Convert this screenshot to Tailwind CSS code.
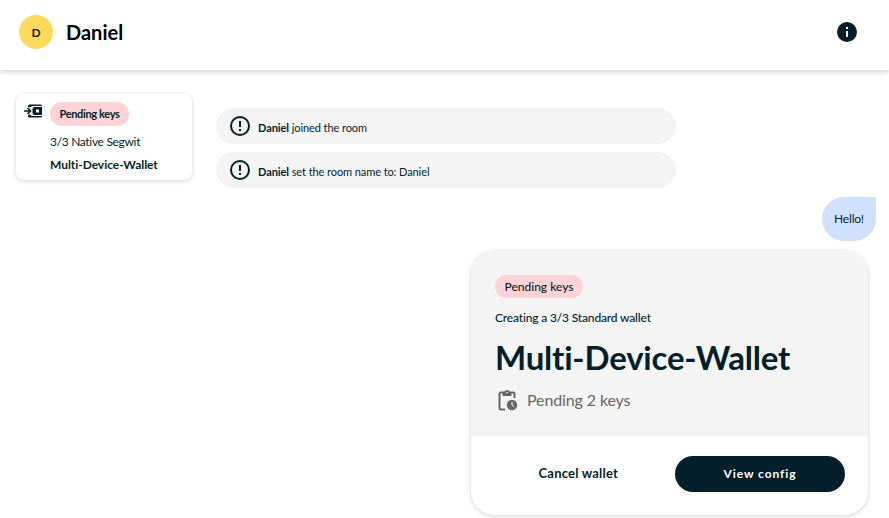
<!DOCTYPE html>
<html lang="en">
<head>
<meta charset="utf-8">
<title>Daniel</title>
<script src="https://cdn.jsdelivr.net/npm/@tailwindcss/browser@4"></script>
</head>
<body class="h-[518px] overflow-hidden bg-white font-['Lato',sans-serif] text-[#031f2b] [font-variant-ligatures:none]">
<header class="flex h-[70px] items-center pb-1.5 pl-[19px] pr-8 shadow-[0_1px_6px_rgba(0,0,0,0.22)]">
  <div class="flex size-[34px] items-center justify-center rounded-full bg-[#ffd95a] pt-px text-[12px] font-bold">D</div>
  <h1 class="ml-[13px] text-[20px] font-bold leading-6 text-black">Daniel</h1>
  <svg class="ml-auto size-5" viewBox="2 2 20 20" fill="#031f2b"><path d="M12 2a10 10 0 1 0 0 20 10 10 0 0 0 0-20zm1 15h-2v-6h2zm0-8h-2V7h2z"/></svg>
</header>
<main class="flex pl-4 pr-[13px] pt-6">
  <aside class="flex h-[86px] w-[176px] shrink-0 rounded-lg bg-white pl-2 pt-2 shadow-[0_1px_5px_rgba(0,0,0,0.18)]">
    <svg class="mt-[2px] h-[14px] w-[18px] shrink-0" viewBox="0 0 18 14" fill="none" stroke="#031f2b"><path d="M4 3V2q0-1.500 1.500-1.500h11Q18 .500 18 2H9Q7 2 6 3.500zM4 11v1q0 1.500 1.500 1.500h11q1.500 0 1.500-1.500H9q-2 0-3-1.500z" fill="#031f2b" stroke="none"/><path d="M10.500 3H18v8h-7.500Q8.500 11 8.500 9V5q0-2 2-2zm1.500 2.500v3h3v-3z" fill="#031f2b" fill-rule="evenodd" stroke="none"/><path d="M0 7h6M3.500 4l3 3-3 3" stroke-width="1.700"/></svg>
    <div class="ml-2">
      <span class="flex h-6 w-[79px] items-center justify-center whitespace-nowrap rounded-full bg-[#ffd3d5] text-[11px] font-bold tracking-[-0.35px]">Pending keys</span>
      <p class="mt-2 whitespace-nowrap text-[12px] leading-4 tracking-[-0.32px]">3/3 Native Segwit</p>
      <p class="mt-[7px] whitespace-nowrap text-[12px] font-bold leading-4 tracking-[-0.05px]">Multi-Device-Wallet</p>
    </div>
  </aside>
  <section class="ml-6 flex grow flex-col">
    <div class="mt-[14px] flex h-9 w-[460px] items-center rounded-full bg-[#f4f4f4] pl-[14px]">
      <svg class="size-5" viewBox="0 0 20 20" fill="none" stroke="#031f2b" stroke-width="2"><circle cx="10" cy="10" r="9"/><path d="M10 5v6M10 13v2"/></svg>
      <p class="ml-2 mt-1 text-[11px] leading-4 tracking-[-0.08px]"><b>Daniel</b> joined the room</p>
    </div>
    <div class="mt-2 flex h-9 w-[460px] items-center rounded-full bg-[#f4f4f4] pl-[14px]">
      <svg class="size-5" viewBox="0 0 20 20" fill="none" stroke="#031f2b" stroke-width="2"><circle cx="10" cy="10" r="9"/><path d="M10 5v6M10 13v2"/></svg>
      <p class="ml-2 mt-1 text-[11px] leading-4 tracking-[-0.08px]"><b>Daniel</b> set the room name to: Daniel</p>
    </div>
    <div class="mt-[9px] flex h-11 w-[54px] items-center justify-center self-end rounded-[22px] rounded-tr-none bg-[#d0e1ff] text-[12px] tracking-[-0.2px]">Hello!</div>
    <article class="mr-2 mt-[10px] h-[264px] w-[397px] self-end overflow-hidden rounded-[24px] bg-white shadow-[0_1px_5px_rgba(0,0,0,0.18)]">
      <div class="h-[185px] bg-[#f4f4f4] pl-6 pt-6">
        <span class="flex h-[23px] w-[88px] items-center justify-center whitespace-nowrap rounded-full bg-[#ffd3d5] text-[12px] font-medium">Pending keys</span>
        <p class="mt-3 text-[12px] font-medium leading-4 tracking-[-0.16px]">Creating a 3/3 Standard wallet</p>
        <h2 class="mt-[11px] text-[33px] font-bold leading-10 tracking-[-0.2px]">Multi-Device-Wallet</h2>
        <div class="mt-[12px] flex items-center text-[#666]">
          <svg class="ml-[3px] h-[22px] w-[20px]" viewBox="0 0 20 22"><path d="M7 20.500H3q-1.500 0-1.500-1.500V5Q1.500 3.500 3 3.500h12q1.500 0 1.500 1.500v4" fill="none" stroke="currentColor" stroke-width="2"/><path d="M4.500 3H6.300a2.800 2.800 0 0 1 5.400 0h1.800v4h-9z" fill="currentColor"/><circle cx="9" cy="3.500" r=".8" fill="#f4f4f4"/><circle cx="14" cy="16" r="5.200" fill="currentColor"/><path d="M14 12.800V16l2 2" fill="none" stroke="#f4f4f4"/></svg>
          <span class="ml-[9px] text-[16px] leading-5 tracking-[-0.12px]">Pending 2 keys</span>
        </div>
      </div>
      <div class="flex h-[79px] items-center justify-end pb-1 pr-[23px]">
        <button class="mr-[57px] whitespace-nowrap text-[13px] font-bold tracking-[0.2px]">Cancel wallet</button>
        <button class="h-9 w-[170px] rounded-full bg-[#031f2b] text-[12px] font-bold tracking-[0.9px] text-white">View config</button>
      </div>
    </article>
  </section>
</main>
</body>
</html>
